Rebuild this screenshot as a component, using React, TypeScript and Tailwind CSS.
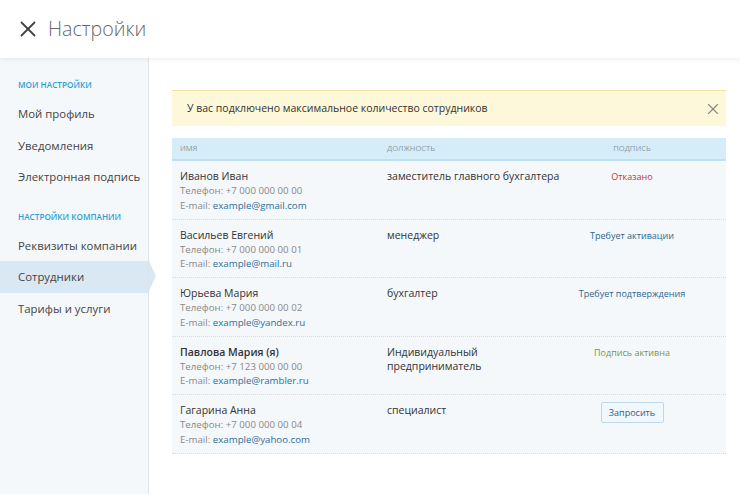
import { X } from "lucide-react"

type Status = "refused" | "activation" | "confirm" | "active" | "request"

type Employee = {
	name: string
	me?: boolean
	phone: string
	email: string
	position: string[]
	status: Status
}

const employees: Employee[] = [
	{ name: "Иванов Иван", phone: "+7 000 000 00 00", email: "example@gmail.com", position: ["заместитель главного бухгалтера"], status: "refused" },
	{ name: "Васильев Евгений", phone: "+7 000 000 00 01", email: "example@mail.ru", position: ["менеджер"], status: "activation" },
	{ name: "Юрьева Мария", phone: "+7 000 000 00 02", email: "example@yandex.ru", position: ["бухгалтер"], status: "confirm" },
	{ name: "Павлова Мария (я)", me: true, phone: "+7 123 000 00 00", email: "example@rambler.ru", position: ["Индивидуальный", "предприниматель"], status: "active" },
	{ name: "Гагарина Анна", phone: "+7 000 000 00 04", email: "example@yahoo.com", position: ["специалист"], status: "request" },
]

function StatusCell({ status }: { status: Status }) {
	if (status === "request") {
		return (
			<button className="mt-[7px] h-[21px] w-[63px] rounded-[2px] border border-[#bcd8ea] bg-[#f1f8fd] text-[9px] text-[#2d5f82]">
				Запросить
			</button>
		)
	}
	const map = {
		refused: ["Отказано", "text-[#c0392b]"],
		activation: ["Требует активации", "text-[#2d6690]"],
		confirm: ["Требует подтверждения", "text-[#2d6690]"],
		active: ["Подпись активна", "text-[#6f9a3c]"],
	}
	const [label, color] = map[status]
	return <div className={`pt-[8px] text-[9px] leading-[15px] ${color}`}>{label}</div>
}

function NavItem({ label, active }: { label: string; active?: boolean }) {
	return (
		<div
			className={`relative flex h-[31.5px] items-center pl-[18px] text-[11.4px] text-[#444] ${active ? "bg-[#d9e8f2]" : ""}`}
		>
			{label}
			{active && (
				<span className="absolute right-[-8px] top-0 h-0 w-0 border-y-[15.75px] border-l-[7px] border-y-transparent border-l-[#d9e8f2]" />
			)}
		</div>
	)
}

export default function App() {
	return (
		<div className="flex h-[494px] w-[740px] flex-col overflow-hidden bg-white font-['Open_Sans',sans-serif]">
			<header className="relative z-10 flex h-[58px] shrink-0 items-center bg-white pl-[15px] shadow-[0_1px_5px_rgba(0,0,0,0.08)]">
				<X className="size-[26px] text-[#444]" strokeWidth={1.7} />
				<h1 className="ml-[7px] text-[19.6px] font-light text-[#666]">Настройки</h1>
			</header>

			<div className="flex flex-1">
				<aside className="relative w-[149px] shrink-0 border-r border-[#dde4ea] bg-[#f5f8fb] pt-[19px]">
					<div className="mb-[5px] h-[16px] pl-[18px] text-[8.2px] leading-[16px] font-semibold text-[#2a9fd8] uppercase">
						Мои настройки
					</div>
					<NavItem label="Мой профиль" />
					<NavItem label="Уведомления" />
					<NavItem label="Электронная подпись" />
					<div className="mt-[16px] mb-[5px] h-[16px] pl-[18px] text-[8.2px] leading-[16px] font-semibold text-[#2a9fd8] uppercase">
						Настройки компании
					</div>
					<NavItem label="Реквизиты компании" />
					<NavItem label="Сотрудники" active />
					<NavItem label="Тарифы и услуги" />
				</aside>

				<main className="flex-1 pt-[32px] pr-[14px] pl-[23px]">
					<div className="flex h-[36px] items-center justify-between border-t border-[#f3e49c] bg-[#fdf8da] pr-[4px] pl-[15px] text-[10.5px] text-[#333]">
						<span>У вас подключено максимальное количество сотрудников</span>
						<X className="size-[18px] text-[#888]" strokeWidth={1.5} />
					</div>

					<div className="mt-[12px]">
						<div className="grid h-[23px] grid-cols-[215px_180px_130px_1fr] items-center border-b-2 border-[#c0e0f1] bg-[#d5edf9] text-[7.6px] text-[#8a98a3] uppercase">
							<div className="pl-[8px]">Имя</div>
							<div>Должность</div>
							<div className="text-center">Подпись</div>
						</div>
						{employees.map((e) => (
							<div
								key={e.email}
								className="grid h-[58.5px] grid-cols-[215px_180px_130px_1fr] border-b border-dotted border-[#d5dde3] bg-[#f5f8fb]"
							>
								<div className="pt-[7px] pl-[8px]">
									<div className={`text-[10.5px] leading-[16px] text-[#333] ${e.me ? "font-semibold" : ""}`}>{e.name}</div>
									<div className="text-[9.7px] leading-[14.5px] text-[#888]">Телефон: {e.phone}</div>
									<div className="text-[9.7px] leading-[14.5px] text-[#888]">
										E-mail: <span className="text-[#2a6f9c]">{e.email}</span>
									</div>
								</div>
								<div className="pt-[8px] text-[10.5px] leading-[14.5px] text-[#333]">
									{e.position.map((p) => (
										<div key={p}>{p}</div>
									))}
								</div>
								<div className="flex justify-center">
									<StatusCell status={e.status} />
								</div>
							</div>
						))}
					</div>
				</main>
			</div>
		</div>
	)
}
